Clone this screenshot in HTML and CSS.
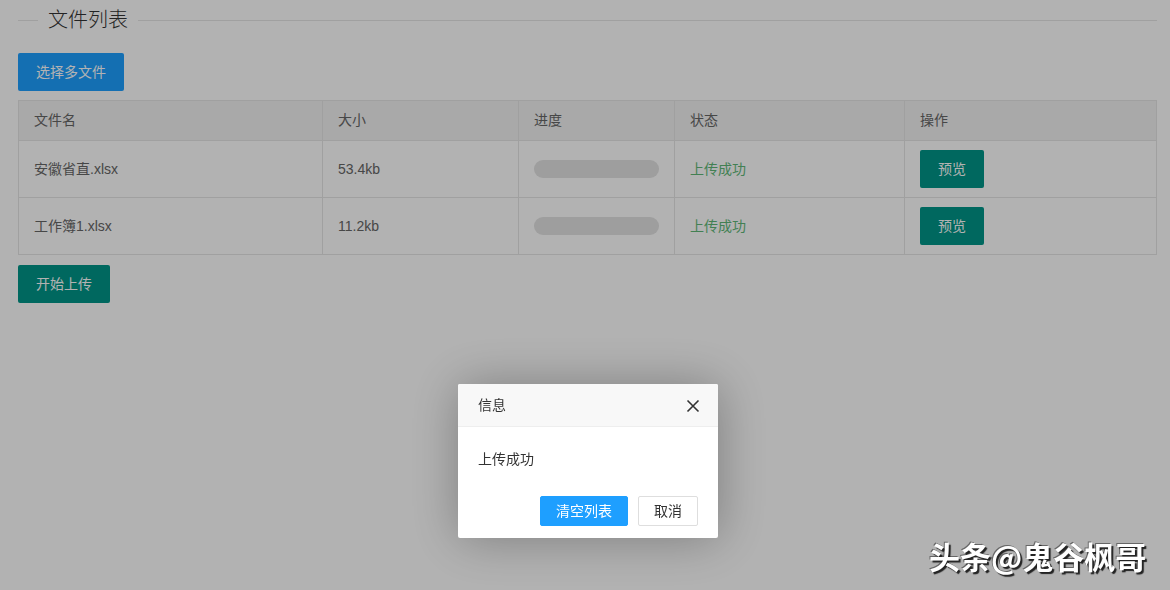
FILE: index.html
```html
<!DOCTYPE html>
<html lang="zh-CN">
<head>
    <meta charset="UTF-8">
    <title>文件列表</title>
    <link rel="stylesheet" href="styles.css">
</head>
<body>
    <div class="page">
        <fieldset class="elem-field">
            <legend>文件列表</legend>
        </fieldset>

        <button class="btn btn-normal">选择多文件</button>

        <table class="file-table">
            <colgroup>
                <col style="width: 304px">
                <col style="width: 196px">
                <col style="width: 156px">
                <col style="width: 230px">
                <col>
            </colgroup>
            <thead>
                <tr>
                    <th>文件名</th>
                    <th>大小</th>
                    <th>进度</th>
                    <th>状态</th>
                    <th>操作</th>
                </tr>
            </thead>
            <tbody>
                <tr>
                    <td>安徽省直.xlsx</td>
                    <td>53.4kb</td>
                    <td><div class="progress"></div></td>
                    <td class="ok">上传成功</td>
                    <td><button class="btn">预览</button></td>
                </tr>
                <tr>
                    <td>工作簿1.xlsx</td>
                    <td>11.2kb</td>
                    <td><div class="progress"></div></td>
                    <td class="ok">上传成功</td>
                    <td><button class="btn">预览</button></td>
                </tr>
            </tbody>
        </table>

        <button class="btn">开始上传</button>
    </div>

    <!-- 遮罩 -->
    <div class="shade"></div>

    <!-- 弹窗 -->
    <div class="layer">
        <div class="layer-title">
            信息
            <svg class="layer-close" width="14" height="14" viewBox="0 0 14 14">
                <path d="M1.5 1.5 L12.5 12.5 M12.5 1.5 L1.5 12.5" stroke="#333" stroke-width="1.6" fill="none"/>
            </svg>
        </div>
        <div class="layer-content">上传成功</div>
        <div class="layer-btns">
            <a class="layer-btn primary">清空列表</a><a class="layer-btn">取消</a>
        </div>
    </div>

    <div class="watermark">头条@鬼谷枫哥</div>
</body>
</html>
```

FILE: styles.css
```css
* {
    margin: 0;
    padding: 0;
    box-sizing: border-box;
    font-family: "Liberation Sans", "Noto Sans CJK SC", sans-serif;
}

body {
    background: #fff;
    color: #666;
    font-size: 14px;
}

.page {
    padding: 0 13px 0 18px;
}

.elem-field {
    margin-top: 6px;
    border: none;
    border-top: 1px solid #e6e6e6;
}

.elem-field legend {
    margin-left: 20px;
    padding: 0 10px;
    font-size: 20px;
    line-height: 28px;
    font-weight: 300;
    color: #333;
}

.btn {
    display: inline-block;
    height: 38px;
    line-height: 38px;
    padding: 0 18px;
    background: #009688;
    color: #fff;
    border: none;
    border-radius: 2px;
    font-size: 14px;
    cursor: pointer;
}

.btn-normal {
    background: #1E9FFF;
    margin-top: 19px;
}

.file-table {
    width: 1139px;
    margin: 9px 0 10px;
    border-collapse: collapse;
    table-layout: fixed;
}

.file-table th,
.file-table td {
    border: 1px solid #e6e6e6;
    padding: 9px 15px;
    line-height: 20px;
    text-align: left;
    font-weight: normal;
    color: #666;
}

.file-table th {
    padding-bottom: 10px;
}

.file-table thead tr {
    background: #f2f2f2;
}

.progress {
    height: 18px;
    width: 125px;
    border-radius: 20px;
    background: #e2e2e2;
}

.file-table td.ok {
    color: #5FB878;
}

.shade {
    position: fixed;
    inset: 0;
    background: rgba(0, 0, 0, 0.3);
}

.layer {
    position: fixed;
    left: 458px;
    top: 384px;
    width: 260px;
    background: #fff;
    border-radius: 2px;
    box-shadow: 1px 1px 50px rgba(0, 0, 0, 0.3);
}

.layer-title {
    position: relative;
    height: 43px;
    line-height: 42px;
    padding: 0 80px 0 20px;
    background: #F8F8F8;
    border-bottom: 1px solid #eee;
    color: #333;
    font-size: 14px;
    border-radius: 2px 2px 0 0;
}

.layer-close {
    position: absolute;
    right: 18px;
    top: 15px;
}

.layer-content {
    padding: 20px;
    line-height: 24px;
    color: #333;
    font-size: 14px;
}

.layer-btns {
    text-align: right;
    padding: 0 15px 12px;
}

.layer-btn {
    display: inline-block;
    height: 30px;
    line-height: 28px;
    margin: 5px 5px 0;
    padding: 0 15px;
    border: 1px solid #dedede;
    background: #fff;
    color: #333;
    border-radius: 2px;
    font-size: 14px;
    cursor: pointer;
}

.layer-btn.primary {
    background: #1E9FFF;
    border-color: #1E9FFF;
    color: #fff;
}

.watermark {
    position: fixed;
    left: 929px;
    top: 535px;
    font-size: 31px;
    line-height: 42px;
    font-weight: 700;
    color: #fff;
    font-family: "Noto Sans CJK SC", sans-serif;
    text-shadow: 2px 2px 1px #222, -1px -1px 0 #666;
    white-space: nowrap;
}
```
